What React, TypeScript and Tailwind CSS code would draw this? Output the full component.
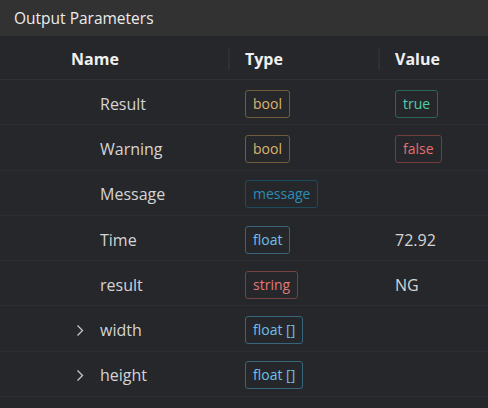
import React from "react";

type Badge = { text: string; cls: string };

const bool: Badge = { text: "bool", cls: "border-[#6e5d3c] text-[#dcb46f]" };
const msg: Badge = { text: "message", cls: "border-[#1d4a5c] text-[#2a8db5]" };
const flt: Badge = { text: "float", cls: "border-[#36657c] text-[#6cc0ea]" };
const str: Badge = { text: "string", cls: "border-[#744343] text-[#e37777]" };
const fltArr: Badge = { text: "float []", cls: "border-[#36657c] text-[#6cc0ea]" };

type Row = { name: string; type: Badge; value?: Badge | string; expand?: boolean };

const rows: Row[] = [
  { name: "Result", type: bool, value: { text: "true", cls: "border-[#2c6657] text-[#4fd0a5]" } },
  { name: "Warning", type: bool, value: { text: "false", cls: "border-[#733d3d] text-[#e36f6f]" } },
  { name: "Message", type: msg },
  { name: "Time", type: flt, value: "72.92" },
  { name: "result", type: str, value: "NG" },
  { name: "width", type: fltArr, expand: true },
  { name: "height", type: fltArr, expand: true },
];

function Pill({ b }: { b: Badge }) {
  return (
    <span className={`inline-flex h-[28px] items-center rounded-[3px] border px-[7px] text-[14px] leading-none ${b.cls}`}>
      {b.text}
    </span>
  );
}

export default function App() {
  return (
    <div
      className="flex h-[408px] w-[488px] flex-col overflow-hidden bg-[#26272b]"
      style={{ fontFamily: '"Open Sans", "Noto Sans", sans-serif' }}
    >
      <div className="flex h-[36px] shrink-0 items-center bg-[#323232] pl-[14px] pt-[2px] text-[15.5px] text-[#ececec]">
        Output Parameters
      </div>
      <div className="grid h-[44px] shrink-0 grid-cols-[228px_150px_1fr] items-center border-b border-[#303136] pt-[2px] text-[16px] font-bold text-[#f0f0f0]">
        <div className="pl-[71px]">Name</div>
        <div className="flex h-[22px] items-center border-l-2 border-[#2f3034] pl-[15px]">Type</div>
        <div className="flex h-[22px] items-center border-l-2 border-[#2f3034] pl-[15px]">Value</div>
      </div>
      {rows.map((r) => (
        <div
          key={r.name}
          className="grid h-[45.3px] shrink-0 grid-cols-[228px_150px_1fr] items-center border-b border-[#2d2e33] pt-[3px] text-[16px] text-[#d4d4d4]"
        >
          <div className="flex items-center pl-[71px]">
            <span className="flex w-[29px] items-center justify-start pl-[5px]">
              {r.expand && (
                <svg width="8" height="13" viewBox="0 0 8 13" fill="none">
                  <path d="M1.5 1.5 L6.5 6.5 L1.5 11.5" stroke="#c8c8c8" strokeWidth="1.3" />
                </svg>
              )}
            </span>
            <span>{r.name}</span>
          </div>
          <div className="pl-[17px]">
            <Pill b={r.type} />
          </div>
          <div className="pl-[17px]">
            {r.value === undefined ? null : typeof r.value === "string" ? (
              <span>{r.value}</span>
            ) : (
              <Pill b={r.value} />
            )}
          </div>
        </div>
      ))}
    </div>
  );
}
